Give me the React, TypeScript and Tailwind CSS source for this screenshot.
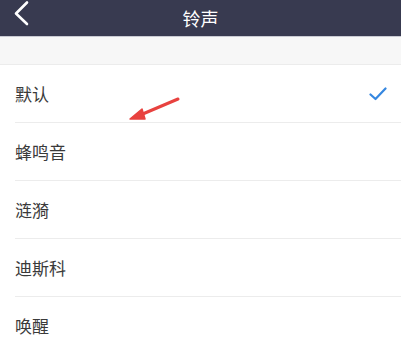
const items = ['默认', '蜂鸣音', '涟漪', '迪斯科', '唤醒'];

export default function App() {
  return (
    <div
      className="relative h-[352px] w-[401px] overflow-hidden bg-white"
      style={{ fontFamily: '"Noto Sans CJK SC", "Noto Sans", sans-serif' }}
    >
      <header className="relative flex h-[37px] items-center justify-center border-b border-[#c9cad3] bg-[#383a50]">
        <svg className="absolute left-[10px] top-0" width="24" height="28" viewBox="0 0 24 28" fill="none">
          <path d="M17 2.5 L6 13.5 L17 24" stroke="white" strokeWidth="2.6" strokeLinecap="round" strokeLinejoin="round" />
        </svg>
        <span className="text-[18px] leading-none text-white">铃声</span>
      </header>
      <div className="h-[28px] border-b border-[#ececec] bg-[#f7f7f7]" />
      <ul className="pl-[15px]">
        {items.map((label, i) => (
          <li
            key={label}
            className="flex h-[58px] items-center justify-between border-b border-[#ececec] pr-[14px]"
          >
            <span className="text-[17px] text-[#3a3a3a]">{label}</span>
            {i === 0 && (
              <svg width="18" height="14" viewBox="0 0 18 14" fill="none">
                <path d="M1.5 7.5 L6.5 12 L16.5 1.5" stroke="#3587e0" strokeWidth="2.2" strokeLinecap="round" strokeLinejoin="round" />
              </svg>
            )}
          </li>
        ))}
      </ul>
      <svg className="absolute left-[126px] top-[93px]" width="58" height="32" viewBox="0 0 58 32" fill="none">
        <path d="M52 6 L12 23" stroke="#e8423f" strokeWidth="3" strokeLinecap="round" />
        <path d="M4 26 L16 16 L19 26 Z" fill="#e8423f" stroke="#e8423f" strokeWidth="1.5" strokeLinejoin="round" />
      </svg>
    </div>
  );
}
